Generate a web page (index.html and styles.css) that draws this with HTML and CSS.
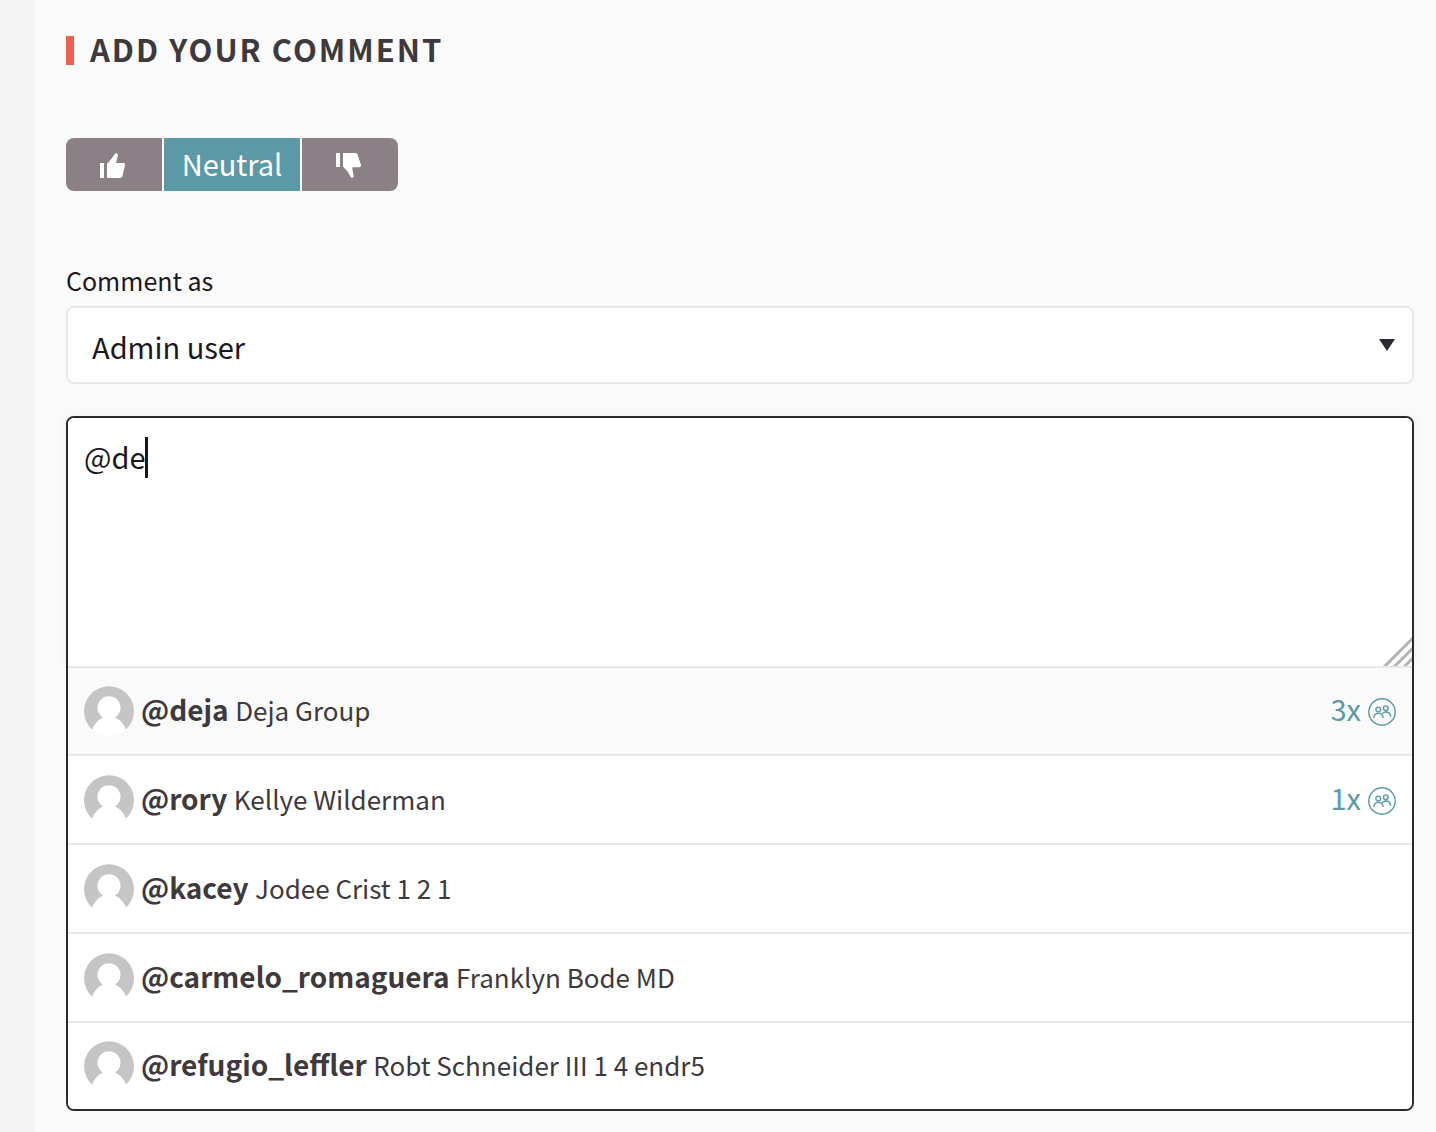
FILE: index.html
```
<!DOCTYPE html>
<html lang="en">

<head>
    <meta charset="utf-8">
    <title>Add your comment</title>
    <link rel="stylesheet" href="styles.css">
</head>

<body>
    <!-- shared icons -->
    <svg class="symbols" aria-hidden="true">
        <symbol id="avatar" viewBox="0 0 50 50">
            <circle cx="25" cy="25" r="25" fill="#fff" />
            <path fill="#c5c5c5" d="M8 43.500A25 25 0 1 1 42 43.500Q38.500 35 31 31.500A11.500 11.500 0 1 0 19 31.500Q11.500 35 8 43.500Z" />
        </symbol>
        <symbol id="group" viewBox="0 0 28 28">
            <g fill="none" stroke="currentColor" stroke-width="1.400">
                <circle cx="14" cy="14" r="13.200" />
                <circle cx="10.300" cy="11.500" r="2.400" />
                <circle cx="17.800" cy="10.300" r="2.400" />
                <path d="M5.700 20c.3-3 2.200-4.600 4.700-4.600s4.500 1.600 4.800 4.600M14.200 15.500c1-1 2.200-1.500 3.600-1.500 2.600 0 4.600 1.700 4.900 4.700" />
            </g>
        </symbol>
    </svg>

    <main class="comment-panel">
        <h2 class="section-heading">Add your comment</h2>

        <form class="add-comment">
            <div class="opinion-toggle">
                <button type="button" class="opinion" aria-label="I agree">
                    <svg width="26" height="26" viewBox="0 0 26 26">
                        <path fill="#fff" d="M0 10h4v15H0zM7 11l5-6 3-4.200Q16 0 17 0.600 18.200 1 17.800 2.500L16 10h7.500Q25.500 10.200 25 12L22.500 23Q22 25 20 25H7z" />
                    </svg>
                </button>
                <button type="button" class="opinion opinion-selected">Neutral</button>
                <button type="button" class="opinion" aria-label="I disagree">
                    <svg width="26" height="26" viewBox="0 0 26 26">
                        <path fill="#fff" d="M0 0h4v14H0zM7 0h12.500Q21 0 21.500 1.500L25 12Q25.200 14 23.500 14.200H16.500Q16 16 16.800 18L17.600 23Q17.700 24.600 16.500 24.800 15 25 14.400 23.600L12 19 7 13.500z" />
                    </svg>
                </button>
            </div>

            <label class="field-label" for="comment-as">Comment as</label>
            <div class="select-wrap">
                <select id="comment-as" class="comment-as">
                    <option>Admin user</option>
                </select>
                <svg class="arrow" width="16" height="12" viewBox="0 0 16 12"><path fill="#2c2930" d="M0 0h16L8 12z" /></svg>
            </div>

            <div class="mention-box">
                <div class="editor">
                    <textarea class="comment-text" aria-label="Comment" spellcheck="false">@de</textarea>
                    <span class="caret"></span>
                    <svg class="grip" width="30" height="30" viewBox="0 0 30 30">
                        <path stroke="#b2b2b2" stroke-width="3" d="M1 32L32 1M11 32L32 11M21 32L32 21" />
                    </svg>
                </div>
                <ul class="mentions">
                    <li class="mention mention-active">
                        <svg class="avatar"><use href="#avatar" /></svg>
                        <span class="who"><strong>@deja</strong> <small>Deja Group</small></span>
                        <span class="members">3x <svg class="group-icon"><use href="#group" /></svg></span>
                    </li>
                    <li class="mention">
                        <svg class="avatar"><use href="#avatar" /></svg>
                        <span class="who"><strong>@rory</strong> <small>Kellye Wilderman</small></span>
                        <span class="members">1x <svg class="group-icon"><use href="#group" /></svg></span>
                    </li>
                    <li class="mention">
                        <svg class="avatar"><use href="#avatar" /></svg>
                        <span class="who"><strong>@kacey</strong> <small>Jodee Crist 1 2 1</small></span>
                    </li>
                    <li class="mention">
                        <svg class="avatar"><use href="#avatar" /></svg>
                        <span class="who"><strong>@carmelo_romaguera</strong> <small>Franklyn Bode MD</small></span>
                    </li>
                    <li class="mention">
                        <svg class="avatar"><use href="#avatar" /></svg>
                        <span class="who"><strong>@refugio_leffler</strong> <small>Robt Schneider III 1 4 endr5</small></span>
                    </li>
                </ul>
            </div>
        </form>
    </main>
</body>

</html>
```
FILE: styles.css
```
* {
    box-sizing: border-box;
}

body {
    margin: 0;
    padding-left: 34px;
    background-color: #f4f4f4;
    color: #3d393c;
    font-family: "Noto Sans CJK SC", "Noto Sans", sans-serif;
    font-size: 29px;
    line-height: 40px;
}

button,
select,
textarea {
    font: inherit;
}

.symbols {
    display: none;
}

.comment-panel {
    min-height: 100vh;
    padding: 29px 22px 20px 32px;
    background-color: #fafafa;
}

.section-heading {
    display: flex;
    align-items: center;
    gap: 16px;
    margin: 0 0 69px;
    font-size: 31px;
    font-weight: 600;
    letter-spacing: 2px;
    text-transform: uppercase;
}

.section-heading::before {
    content: "";
    width: 8px;
    height: 29px;
    margin-top: 2px;
    background-color: #ef604d;
}

/* agree / neutral / disagree */
.opinion-toggle {
    display: flex;
    gap: 2px;
    margin-bottom: 69px;
}

.opinion {
    display: flex;
    align-items: center;
    justify-content: center;
    width: 96px;
    height: 53px;
    padding: 2px 2px 0 0;
    border: none;
    background-color: #8c8087;
    color: #fff;
    cursor: pointer;
}

.opinion:first-child {
    border-radius: 8px 0 0 8px;
}

.opinion:last-child {
    border-radius: 0 8px 8px 0;
}

.opinion-selected {
    width: 136px;
    padding: 0 0 4px;
    background-color: #5b99a6;
}

.field-label {
    display: block;
    margin-bottom: 6px;
    color: #1a181d;
    font-size: 25px;
}

.select-wrap {
    position: relative;
    margin-bottom: 32px;
}

.comment-as {
    display: block;
    width: 100%;
    height: 78px;
    padding: 2px 48px 0 24px;
    border: 2px solid #e8e8e8;
    border-radius: 8px;
    background-color: #fff;
    color: #1a181d;
    appearance: none;
}

.arrow {
    position: absolute;
    top: 33px;
    right: 19px;
    pointer-events: none;
}

/* textarea with the list of people below it */
.mention-box {
    border: 2px solid #2c2930;
    border-radius: 8px;
    background-color: #fff;
}

.editor {
    position: relative;
    border-radius: 6px 6px 0 0;
    box-shadow: 0 0 16px rgba(0, 0, 0, 0.06);
}

.comment-text {
    display: block;
    width: 100%;
    height: 248px;
    padding: 18px 16px;
    border: none;
    border-radius: 6px 6px 0 0;
    outline: none;
    background-color: #fff;
    color: #1a181d;
    resize: none;
}

.caret {
    position: absolute;
    top: 19px;
    left: 77px;
    width: 3px;
    height: 41px;
    background-color: #1a181d;
}

.grip {
    position: absolute;
    right: 0;
    bottom: 0;
}

.mentions {
    position: relative;
    margin: 0;
    padding: 0;
    border-radius: 0 0 6px 6px;
    background-color: #fff;
    list-style: none;
}

.mention {
    display: flex;
    align-items: center;
    gap: 7px;
    height: 89px;
    padding: 0 16px;
    border-top: 2px solid #e8e8e8;
}

.mention-active,
.mention:last-child {
    height: 88px;
}

.mention-active {
    background-color: #fafafa;
}

.avatar {
    width: 50px;
    height: 50px;
}

.who {
    flex: 1;
    padding-bottom: 4px;
}

.who strong {
    font-size: 28px;
    font-weight: 600;
}

.who small {
    font-size: 26px;
}

.members {
    display: flex;
    align-items: center;
    gap: 7px;
    padding-bottom: 6px;
    color: #5b99a6;
}

.group-icon {
    width: 28px;
    height: 28px;
    margin-top: 8px;
}
```
